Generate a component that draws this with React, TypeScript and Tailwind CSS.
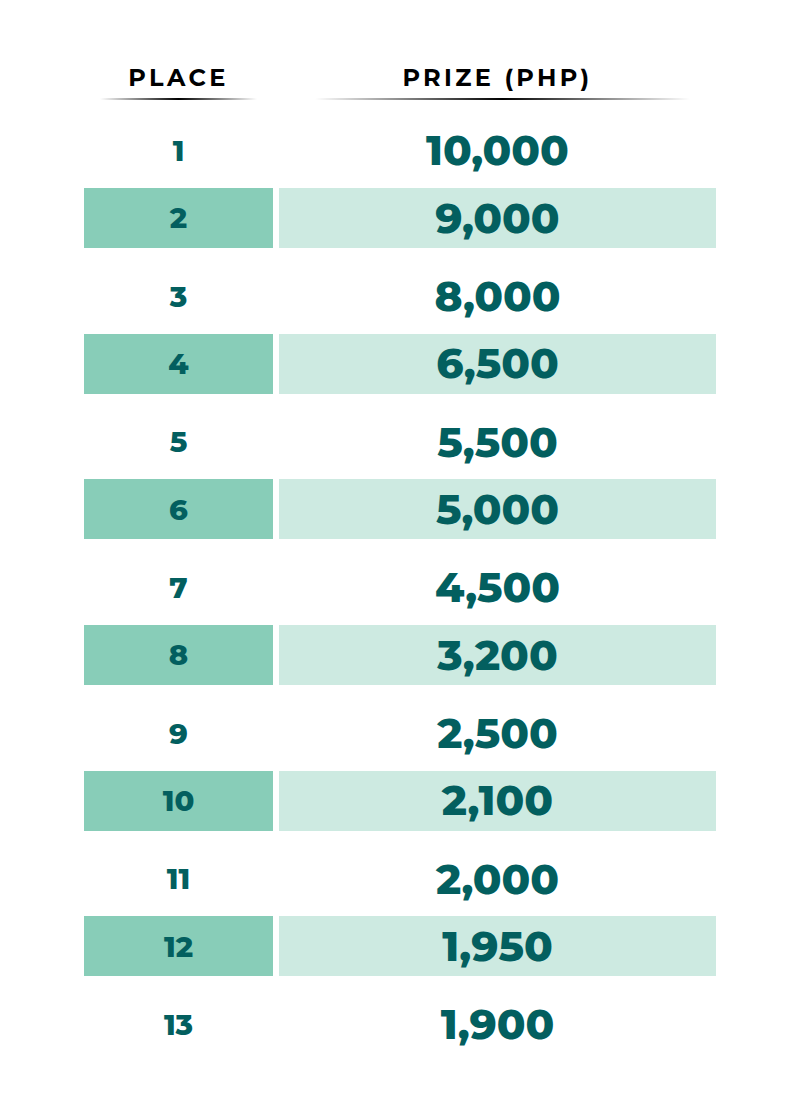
const prizes = [
  "10,000",
  "9,000",
  "8,000",
  "6,500",
  "5,500",
  "5,000",
  "4,500",
  "3,200",
  "2,500",
  "2,100",
  "2,000",
  "1,950",
  "1,900",
]

export default function App() {
  return (
    <div className="min-h-[1112px] bg-white font-['Montserrat','Inter',sans-serif]">
      <div className="mx-auto w-[632px] pt-[64px]">
        {/* header */}
        <div className="flex gap-[6px]">
          <div className="w-[189px]">
            <div className="text-center text-[24px] leading-[28px] font-bold tracking-[0.14em] text-black">PLACE</div>
            <div className="mx-[16px] mt-[6px] h-[2px] bg-gradient-to-r from-transparent via-black to-transparent" />
          </div>
          <div className="w-[437px]">
            <div className="text-center text-[24px] leading-[28px] font-bold tracking-[0.14em] text-black">PRIZE (PHP)</div>
            <div className="ml-[36px] mr-[26px] mt-[6px] h-[2px] bg-gradient-to-r from-transparent via-black to-transparent" />
          </div>
        </div>

        {/* rows */}
        <div className="mt-[2.5px]">
          {prizes.map((prize, i) => {
            const shaded = i % 2 === 1
            return (
              <div key={i} className={`flex gap-[6px] text-[#035f5f] font-extrabold ${shaded ? "h-[60px]" : "h-[85.67px] pt-[11px]"}`}>
                <div className={`w-[189px] flex items-center justify-center text-[29px] ${shaded ? "bg-[#88cdb8]" : ""}`}>
                  {i + 1}
                </div>
                <div className={`w-[437px] flex items-center justify-center text-[42px] ${shaded ? "bg-[#cdeae1]" : ""}`}>
                  {prize}
                </div>
              </div>
            )
          })}
        </div>
      </div>
    </div>
  )
}
